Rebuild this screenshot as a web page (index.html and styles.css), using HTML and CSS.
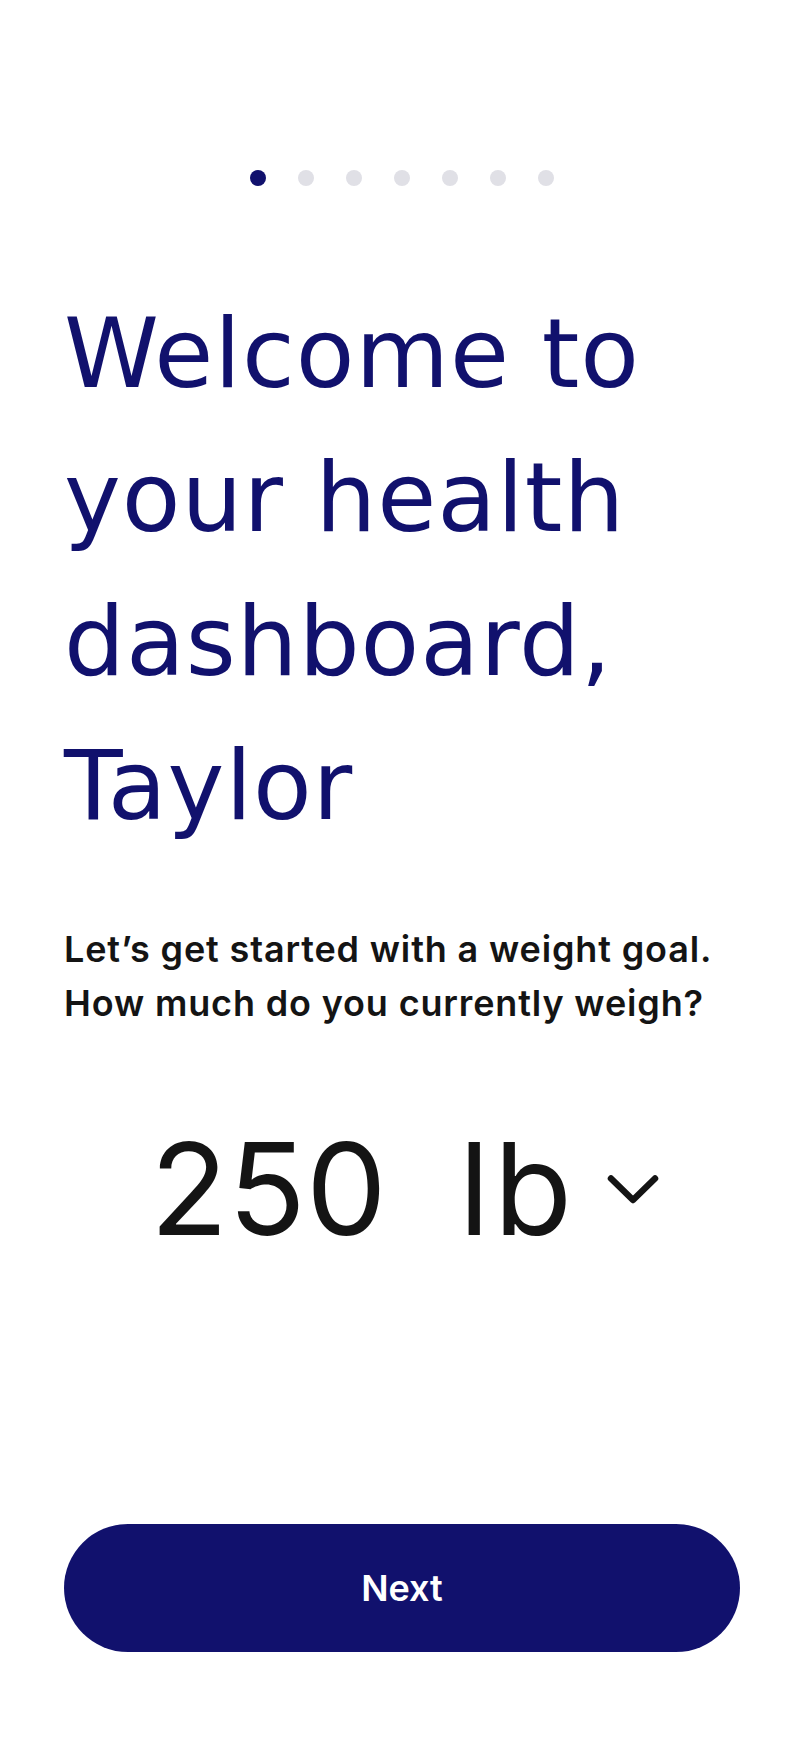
FILE: index.html
```html
<!DOCTYPE html>
<html lang="en">
<head>
<meta charset="utf-8">
<title>Welcome</title>
<link rel="stylesheet" href="styles.css">
</head>
<body>
<main class="screen">
  <div class="dots">
    <span class="dot dot-active"></span>
    <span class="dot"></span>
    <span class="dot"></span>
    <span class="dot"></span>
    <span class="dot"></span>
    <span class="dot"></span>
    <span class="dot"></span>
  </div>
  <h1 class="title">Welcome to your health dashboard, Taylor</h1>
  <p class="prompt">Let’s get started with a weight goal.<br>How much do you currently weigh?</p>
  <div class="weight">
    <span class="weight-value">250</span>
    <span class="weight-unit">lb</span>
    <svg class="chevron" width="54" height="32" viewBox="0 0 54 32" aria-hidden="true">
      <path d="M5 5.5 L27 27 L49 5.5" fill="none" stroke="#141414" stroke-width="6.5" stroke-linecap="round" stroke-linejoin="round"/>
    </svg>
  </div>
  <button class="next" type="button">Next</button>
</main>
</body>
</html>
```
FILE: styles.css
```css
html, body {
  margin: 0;
  padding: 0;
  background: #ffffff;
}

.screen {
  box-sizing: border-box;
  min-height: 100vh;
  display: flex;
  flex-direction: column;
  padding: 0 64px 96px;
}

.dots {
  margin-top: 170px;
  display: flex;
  justify-content: center;
  gap: 32px;
  height: 16px;
}

.dot {
  width: 16px;
  height: 16px;
  border-radius: 50%;
  background: #e0e0e6;
}

.dot-active {
  background: #11116d;
}

.title {
  margin: 96px 0 0;
  font-family: "DejaVu Sans", sans-serif;
  font-weight: 400;
  font-size: 96px;
  line-height: 144px;
  letter-spacing: 1px;
  color: #11116d;
}

.prompt {
  margin: 64px 0 0;
  font-family: Inter, sans-serif;
  font-weight: 600;
  font-size: 36px;
  line-height: 54px;
  letter-spacing: 0.85px;
  color: #141414;
}

.weight {
  margin-top: 95px;
  padding-left: 6px;
  height: 128px;
  display: flex;
  justify-content: center;
  align-items: center;
  font-family: Inter, sans-serif;
  font-weight: 400;
  font-size: 128px;
  line-height: 128px;
  color: #141414;
}

.weight-value {
  margin-right: 72px;
}

.weight-unit {
  margin-right: 30px;
  letter-spacing: 4px;
}

.chevron {
  display: block;
}

.next {
  margin-top: auto;
  height: 128px;
  width: 100%;
  border: none;
  border-radius: 64px;
  background: #11116d;
  color: #ffffff;
  font-family: Inter, sans-serif;
  font-weight: 600;
  font-size: 36px;
  cursor: pointer;
}
```
